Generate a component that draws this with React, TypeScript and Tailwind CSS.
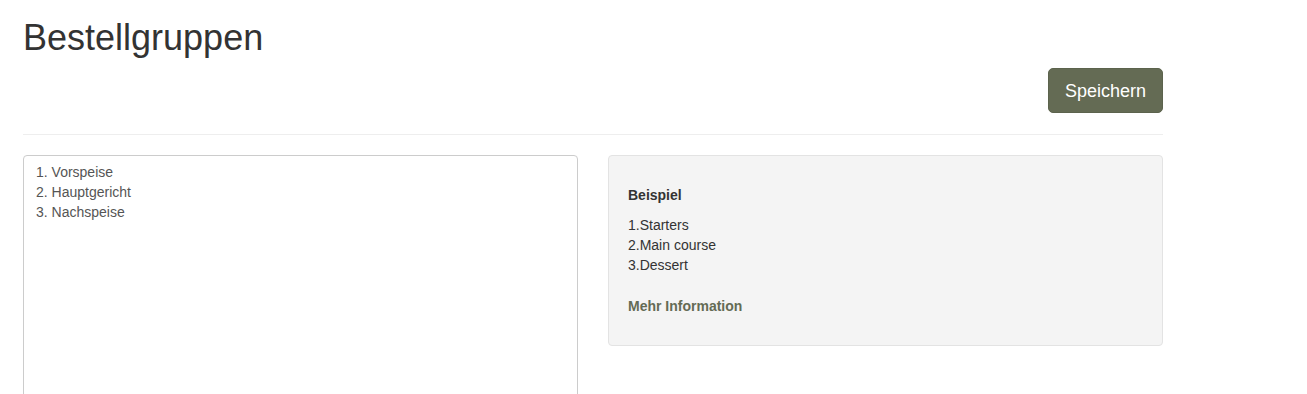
export default function App() {
  return (
    <div className="min-h-[394px] bg-white font-['Liberation_Sans',Arial,sans-serif] text-[#333]">
      <div className="w-[1140px] ml-[23px]">
        {/* Header */}
        <h1 className="pt-[18px] text-[36px] leading-[40px] font-normal text-[#333]">
          Bestellgruppen
        </h1>
        <div className="flex justify-end mt-[10px]">
          <button className="h-[45px] w-[115px] rounded-[5px] bg-[#646b54] text-[18px] leading-[24px] text-white border border-[#5c634d]">
            Speichern
          </button>
        </div>
        <hr className="mt-[21px] border-0 border-t border-[#eee]" />

        {/* Content */}
        <div className="grid grid-cols-2 gap-[30px] mt-[20px]">
          <textarea
            className="h-[300px] w-full resize-none rounded-[4px] border border-[#ccc] px-[12px] pt-[6px] text-[14px] leading-[20px] text-[#555] outline-none"
            defaultValue={"1. Vorspeise\n2. Hauptgericht\n3. Nachspeise"}
          />
          <div className="self-start rounded-[4px] border border-[#e3e3e3] bg-[#f4f4f4] px-[19px] pt-[29px] pb-[29px] text-[14px] leading-[20px] text-[#333]">
            <p className="font-bold">Beispiel</p>
            <div className="mt-[10px]">
              <div>1.Starters</div>
              <div>2.Main course</div>
              <div>3.Dessert</div>
            </div>
            <a href="#" className="block mt-[21px] font-bold text-[#646b54]">
              Mehr Information
            </a>
          </div>
        </div>
      </div>
    </div>
  )
}
